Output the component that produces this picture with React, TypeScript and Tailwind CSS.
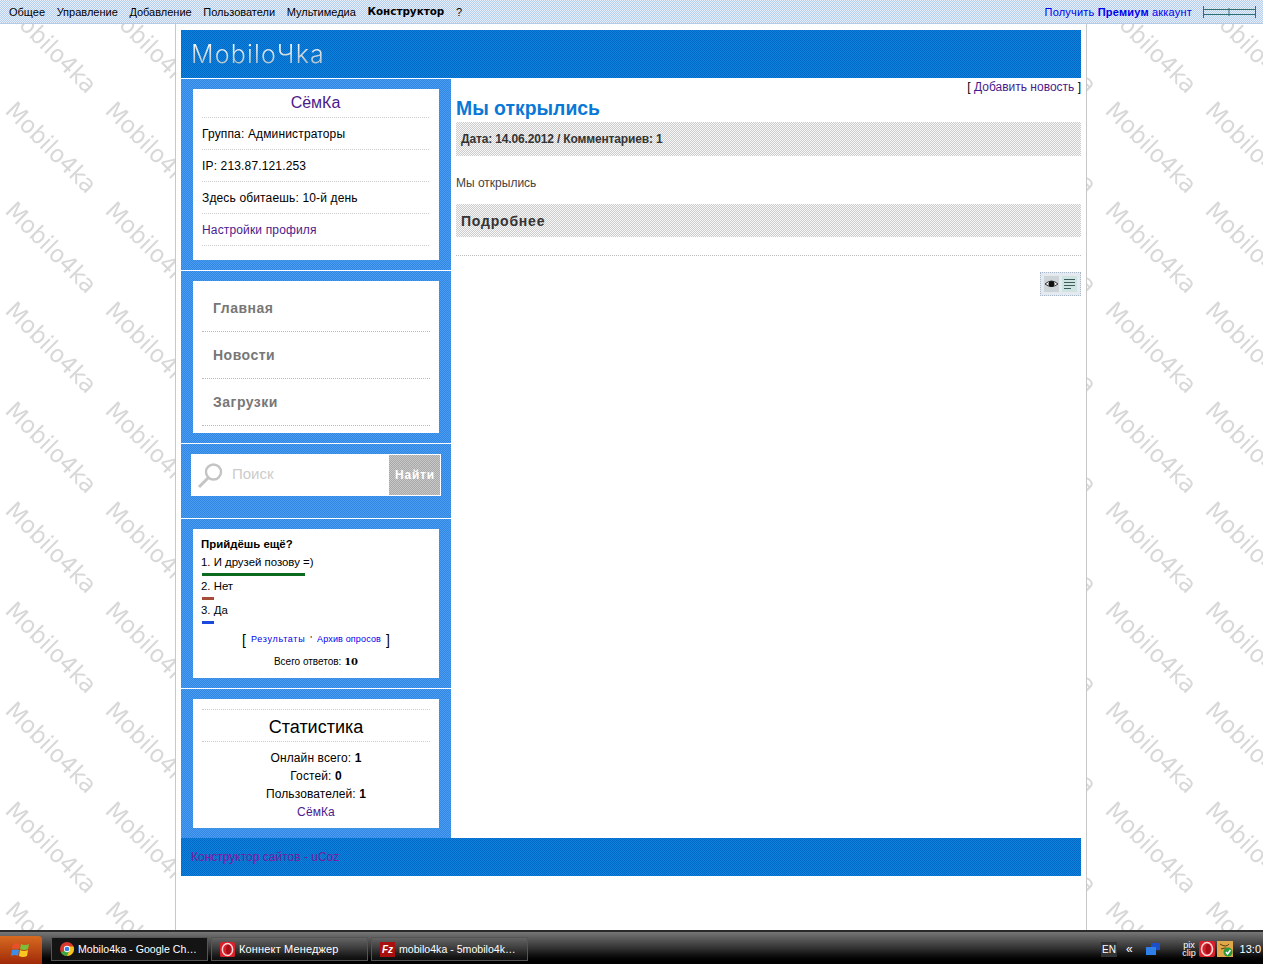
import { ReactNode } from 'react';

const menu = ['Общее', 'Управление', 'Добавление', 'Пользователи', 'Мультимедиа'];
const profileRows = ['Группа: Администраторы', 'IP: 213.87.121.253', 'Здесь обитаешь: 10-й день'];
const navItems = ['Главная', 'Новости', 'Загрузки'];

function Block({ children }: { children: ReactNode }) {
    return (
        <div className="border-t border-white bg-[image:repeating-conic-gradient(#3286e4_0_25%,#4a9cee_0_50%)] bg-[length:2px_2px] px-3 py-2.5">
            <div className="bg-white">{children}</div>
        </div>
    );
}

function Watermark() {
    return (
        <svg className="absolute inset-0 h-full w-full" aria-hidden="true">
            <defs>
                <pattern id="wm" width="100" height="100" patternUnits="userSpaceOnUse">
                    <text
                        transform="translate(4 12) rotate(45)"
                        fontFamily="DejaVu Sans"
                        fontSize="24"
                        fill="#d8d8d8"
                        textLength="117"
                        lengthAdjust="spacingAndGlyphs"
                    >
                        Mobilo4ka
                    </text>
                </pattern>
            </defs>
            <rect width="100%" height="100%" fill="url(#wm)" />
        </svg>
    );
}

function OperaIcon({ size }: { size: number }) {
    return (
        <svg width={size} height={size} viewBox="0 0 16 16">
            <rect width="16" height="16" rx="2" fill="#d8202a" />
            <ellipse cx="8" cy="8" rx="5.5" ry="6.5" fill="none" stroke="#ffd6d6" strokeWidth="1.6" />
            <ellipse cx="9" cy="8" rx="2.5" ry="5" fill="#a80f18" />
        </svg>
    );
}

function ChromeIcon() {
    return (
        <svg width="14" height="14" viewBox="0 0 16 16">
            <circle cx="8" cy="8" r="8" fill="#d93a2e" />
            <path d="M8 8 L1 12 A8 8 0 0 0 8 16 L12 9 Z" fill="#3ea63e" />
            <path d="M8 5 H15.4 A8 8 0 0 1 8 16 L11 9 Z" fill="#f4c51e" />
            <circle cx="8" cy="8" r="3.6" fill="#fff" />
            <circle cx="8" cy="8" r="2.7" fill="#3b7de0" />
        </svg>
    );
}

function WindowsLogo() {
    return (
        <svg width="20" height="20" viewBox="0 0 20 20">
            <path d="M2 4 Q5 2 9 4 L8 9 Q5 8 1 9 Z" fill="#e8502a" />
            <path d="M10 4 Q14 6 18 4 L17 9 Q13 11 9 9 Z" fill="#7cc03a" />
            <path d="M1 10 Q5 9 8 10 L7 16 Q4 14 0 16 Z" fill="#3c8ee8" />
            <path d="M9 10 Q13 12 17 10 L16 16 Q12 18 8 16 Z" fill="#f8c820" />
        </svg>
    );
}

function TaskButton({ active, icon, label, text }: { active?: boolean; icon: ReactNode; label: string; text: string }) {
    return (
        <div
            className={`flex h-[24px] w-[157px] items-center gap-[4px] border border-[#555] pl-[8px] whitespace-nowrap text-white ${text} ${active ? 'bg-[#141414]' : 'bg-white/5'}`}
        >
            {icon}
            <span className="pt-px">{label}</span>
        </div>
    );
}

export default function App() {
    return (
        <div className="relative flex h-[964px] flex-col overflow-hidden bg-white font-['Liberation_Sans',sans-serif] text-[12px] text-black">
            <Watermark />

            {/* Top panel */}
            <div className="relative flex h-[24px] items-center justify-between border-b border-[#b4cbe8] bg-[image:repeating-conic-gradient(#b6cff0_0_25%,#e6eefa_0_50%)] bg-[length:2px_2px] pt-px pr-[7px] pl-[9px] text-[11px]">
                <div className="flex gap-[11.6px]">
                    {menu.map((item) => (
                        <span key={item}>{item}</span>
                    ))}
                    <span className="font-['DejaVu_Sans',sans-serif] text-[10.4px] font-bold">Конструктор</span>
                    <span>?</span>
                </div>
                <div className="flex items-center gap-[11px]">
                    <span className="tracking-[0.2px] text-[#0000ee]">
                        Получить <b>Премиум</b> аккаунт
                    </span>
                    <svg width="53" height="12" viewBox="0 0 53 12" fill="none" stroke="#2f6f6f">
                        <path d="M0.5 0 V12 M52.5 0 V12 M1 3.5 H52 M1 8.5 H52 M26 2 V10" />
                    </svg>
                </div>
            </div>

            {/* Page column */}
            <div className="relative ml-[175px] w-[912px] flex-1 border-x border-[#c8c8c8] bg-white px-[5px] pt-[6px]">
                <div className="flex h-[48px] items-center bg-[image:repeating-conic-gradient(#0068c4_0_25%,#0a84de_0_50%)] bg-[length:2px_2px] pl-[10px]">
                    <span className="bg-gradient-to-b from-white to-[#aab6c0] bg-clip-text font-['Inter',sans-serif] text-[25px] leading-none font-light tracking-[1.2px] text-transparent">
                        MobiloЧka
                    </span>
                </div>

                <div className="flex">
                    {/* Sidebar */}
                    <div className="w-[270px]">
                        <Block>
                            <div className="pr-[10px] pl-[9px]">
                                <div className="flex h-[29px] items-center justify-center border-b border-dotted border-[#ccc] text-[16px] text-[#4b1a8c]">
                                    СёмКа
                                </div>
                                {profileRows.map((row) => (
                                    <div key={row} className="flex h-[32px] items-center border-b border-dotted border-[#ccc] tracking-[0.15px]">
                                        {row}
                                    </div>
                                ))}
                                <div className="flex h-[32px] items-center border-b border-dotted border-[#ccc] tracking-[0.15px] text-[#4b1a8c]">
                                    Настройки профиля
                                </div>
                                <div className="h-[14px]" />
                            </div>
                        </Block>

                        <Block>
                            <div className="px-[9px] pt-[4px] pb-[7px]">
                                {navItems.map((item) => (
                                    <div
                                        key={item}
                                        className="flex h-[47px] items-center border-b border-dotted border-[#bbb] pl-[11px] text-[14px] font-bold tracking-[0.5px] text-[#777]"
                                    >
                                        {item}
                                    </div>
                                ))}
                            </div>
                        </Block>

                        <div className="border-t border-white bg-[image:repeating-conic-gradient(#3286e4_0_25%,#4a9cee_0_50%)] bg-[length:2px_2px] pt-2.5 pr-[10px] pb-[22px] pl-[10px]">
                            <div className="flex h-[42px] items-center justify-between bg-white pr-px pl-[6px]">
                                <div className="flex items-center gap-[8px]">
                                    <svg width="27" height="27" viewBox="0 0 27 27" fill="none" stroke="#c4c4c4">
                                        <circle cx="16.5" cy="10" r="7.5" strokeWidth="2.4" />
                                        <path d="M11 16 L2 25" strokeWidth="3" />
                                    </svg>
                                    <span className="pb-px text-[15px] text-[#ccc]">Поиск</span>
                                </div>
                                <div className="flex h-[40px] w-[51px] items-center justify-center bg-[image:repeating-conic-gradient(#a8a8a8_0_25%,#c8c8c8_0_50%)] bg-[length:2px_2px] pl-px text-[12px] font-bold tracking-[0.8px] text-white">
                                    Найти
                                </div>
                            </div>
                        </div>

                        <Block>
                            <div className="h-[149px] pt-[8px] pl-[8px] text-[11.4px]">
                                <div className="h-[14px] leading-[14px] font-bold">Прийдёшь ещё?</div>
                                <div className="mt-[4px] h-[14px] leading-[14px]">1. И друзей позову =)</div>
                                <div className="mt-[4px] ml-px h-[3px] w-[103px] bg-[#0c6a1e]" />
                                <div className="mt-[3px] h-[14px] leading-[14px]">2. Нет</div>
                                <div className="mt-[4px] ml-px h-[3px] w-[12px] bg-[#a84c3a]" />
                                <div className="mt-[3px] h-[14px] leading-[14px]">3. Да</div>
                                <div className="mt-[4px] ml-px h-[3px] w-[12px] bg-[#1c48e0]" />
                                <div className="mt-[7px] -ml-[8px] flex h-[18px] items-center justify-center gap-[5px] text-[9px] text-[#0000ee]">
                                    <span className="text-[14px] text-black">[</span>
                                    <span className="tracking-[0.7px]">Результаты</span>
                                    <span className="text-black">'</span>
                                    <span className="tracking-[0.15px]">Архив опросов</span>
                                    <span className="text-[14px] text-black">]</span>
                                </div>
                                <div className="mt-[6px] -ml-[8px] text-center text-[10px] leading-[14px]">
                                    Всего ответов: <b className="font-['DejaVu_Serif',serif]">10</b>
                                </div>
                            </div>
                        </Block>

                        <Block>
                            <div className="h-[129px] px-[9px] pt-[10px] text-center">
                                <div className="flex h-[33px] items-center justify-center border-y border-dotted border-[#ccc] pt-[3px] text-[18px]">
                                    Статистика
                                </div>
                                <div className="mt-[7px] leading-[18px] tracking-[0.1px]">
                                    <div>
                                        Онлайн всего: <b>1</b>
                                    </div>
                                    <div>
                                        Гостей: <b>0</b>
                                    </div>
                                    <div>
                                        Пользователей: <b>1</b>
                                    </div>
                                    <div className="text-[#4b1a8c]">СёмКа</div>
                                </div>
                            </div>
                        </Block>
                    </div>

                    {/* Content */}
                    <div className="w-[630px] bg-white pl-[5px]">
                        <div className="h-[18px] pt-[2px] text-right leading-[14px]">
                            [ <span className="text-[#4b1a8c]">Добавить новость</span> ]
                        </div>
                        <h1 className="h-[26px] text-[19.4px] leading-[24px] font-bold text-[#0a78d6]">Мы открылись</h1>
                        <div className="flex h-[34px] items-center bg-[image:repeating-conic-gradient(#cccccc_0_25%,#f8f8f8_0_50%)] bg-[length:2px_2px] pl-[5px] font-bold tracking-[-0.15px] text-[#333]">
                            Дата: 14.06.2012 / Комментариев: 1
                        </div>
                        <div className="mt-[20px] h-[14px] leading-[14px] text-[#444]">Мы открылись</div>
                        <div className="mt-[14px] flex h-[33px] items-center bg-[image:repeating-conic-gradient(#cccccc_0_25%,#f8f8f8_0_50%)] bg-[length:2px_2px] pt-px pl-[5px] text-[14px] font-bold tracking-[0.8px] text-[#333]">
                            Подробнее
                        </div>
                        <div className="mt-[18px] border-t border-dotted border-[#bbb]" />
                        <div className="mt-[16px] flex justify-end">
                            <div className="flex h-[24px] w-[41px] items-center justify-center gap-[3px] border border-dotted border-[#a8b8c8] bg-[#e4eaf0]">
                                <svg width="15" height="16" viewBox="0 0 15 16">
                                    <rect width="15" height="16" fill="#ccd4d8" />
                                    <path d="M1 8 Q7.5 2 14 8 Q7.5 13 1 8 Z" fill="#f4f4f4" stroke="#333" />
                                    <circle cx="7.5" cy="8" r="3" fill="#111" />
                                </svg>
                                <svg width="15" height="16" viewBox="0 0 15 16" stroke="#3c5a58">
                                    <rect width="15" height="16" fill="#cfe4e0" stroke="none" />
                                    <path d="M2 3.5 H13 M2 6.5 H13 M2 9.5 H13 M2 12.5 H9" />
                                </svg>
                            </div>
                        </div>
                    </div>
                </div>

                <div className="flex h-[38px] items-center bg-[image:repeating-conic-gradient(#0068c4_0_25%,#0a84de_0_50%)] bg-[length:2px_2px] pl-[10px] text-[#7a1a9c]">
                    Конструктор сайтов - uCoz
                </div>
            </div>

            {/* Taskbar */}
            <div className="relative flex h-[34px] items-end overflow-hidden border-t-2 border-[#2a2a2a] bg-gradient-to-b from-[#777] via-[#333] to-black">
                <div className="flex h-[28px] w-[42px] items-center justify-center self-end rounded-tr-sm bg-gradient-to-b from-[#d86a20] to-[#a02808]">
                    <WindowsLogo />
                </div>
                <div className="mb-[3px] ml-[9px] flex gap-[3px]">
                    <TaskButton active text="text-[10.6px]" icon={<ChromeIcon />} label="Mobilo4ka - Google Ch…" />
                    <TaskButton text="text-[11px] tracking-[0.15px]" icon={<OperaIcon size={15} />} label="Коннект Менеджер" />
                    <TaskButton
                        text="text-[10.6px]"
                        icon={
                            <span className="flex h-[15px] w-[15px] items-center justify-center bg-[#a81010] text-[10px] font-bold text-white italic">
                                Fz
                            </span>
                        }
                        label="mobilo4ka - 5mobilo4k…"
                    />
                </div>
                <div className="mb-[6px] ml-auto flex w-[162px] items-center text-[11px] text-white">
                    <span className="bg-[#333] px-px text-[10px]">EN</span>
                    <span className="ml-[9px] text-[12px]">«</span>
                    <svg className="ml-[12px]" width="16" height="14" viewBox="0 0 16 14">
                        <rect x="6" y="1" width="9" height="7" fill="#1c4ec8" />
                        <rect x="1" y="5" width="10" height="8" fill="#2f7fe8" />
                    </svg>
                    <span className="ml-[21px] w-[15px] text-center text-[9px] leading-[8px]">pix clip</span>
                    <span className="ml-[2px]">
                        <OperaIcon size={16} />
                    </span>
                    <svg className="ml-[2px]" width="16" height="16" viewBox="0 0 16 16">
                        <rect width="16" height="16" fill="#e0a848" />
                        <path d="M3 3 Q9 7 12 3 M4 8 Q8 6 12 8" stroke="#5a3a10" fill="none" />
                        <circle cx="11" cy="11" r="4.5" fill="#2a9a3a" />
                        <path d="M9 11 L10.5 13 L13.5 9" stroke="#fff" strokeWidth="1.5" fill="none" />
                    </svg>
                    <span className="ml-[7px]">13:0</span>
                </div>
            </div>
        </div>
    );
}
